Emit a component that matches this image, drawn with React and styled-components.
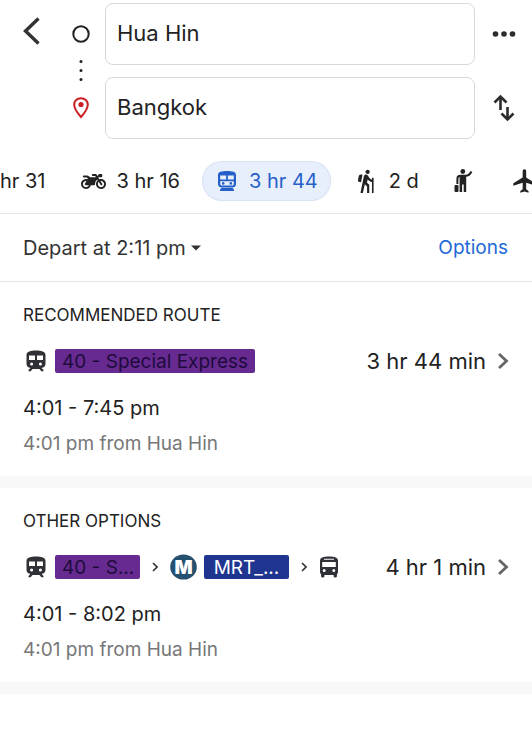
import React, { useState } from "react";
import styled, { createGlobalStyle } from "styled-components";
import { FaMotorcycle } from "react-icons/fa";
import { MdFlight, MdHiking } from "react-icons/md";

const BackIcon = () => (
  <svg width="18" height="30" viewBox="0 0 18 30" fill="none">
    <path d="M16.500 2.500 3.500 15l13 12.500" stroke="#333" strokeWidth="3.400" />
  </svg>
);

const OriginIcon = () => (
  <svg width="18" height="18" viewBox="0 0 18 18" fill="none">
    <circle cx="9" cy="9" r="7.700" stroke="#222" strokeWidth="2" />
  </svg>
);

const TrailIcon = () => (
  <svg width="4" height="22" viewBox="0 0 4 22" fill="#222">
    <circle cx="2" cy="2.500" r="1.500" />
    <circle cx="2" cy="11.500" r="1.500" />
    <circle cx="2" cy="20.500" r="1.500" />
  </svg>
);

const PinIcon = () => (
  <svg width="16" height="22" viewBox="0 0 16 22" fill="none">
    <path
      d="M8 1.200C4.100 1.200 1.200 4 1.200 7.700 1.200 12.300 8 20 8 20s6.800-7.700 6.800-12.300C14.800 4 11.900 1.200 8 1.200z"
      stroke="#cc1f24"
      strokeWidth="2"
    />
    <circle cx="8" cy="7.500" r="2.600" fill="#cc1f24" />
  </svg>
);

const MoreIcon = () => (
  <svg width="24" height="8" viewBox="0 0 24 8" fill="#2c2c2c">
    <circle cx="3.500" cy="4" r="2.800" />
    <circle cx="12" cy="4" r="2.800" />
    <circle cx="20.500" cy="4" r="2.800" />
  </svg>
);

const SwapIcon = () => (
  <svg width="22" height="28" viewBox="0 0 22 28" fill="none">
    <path
      d="M7.500 16V2M1.500 8.500l6-6 6 6M14.500 13v13M8.500 19.500l6 6 6-6"
      stroke="#2c2c2c"
      strokeWidth="2.600"
    />
  </svg>
);

const SubwayIcon = () => (
  <svg width="24" height="22" viewBox="0 0 24 22" fill="currentColor">
    <path
      fillRule="evenodd"
      d="M3 5C3 1.800 6.500 1 12 1s9 .8 9 4v9c0 2-1.500 3.500-3.500 3.500h-11C4.500 17.500 3 16 3 14zM5.200 5.500v4h5.900v-4zm7.700 0v4h5.900v-4zM5.200 11.300v2.800c0 .9.700 1.500 1.600 1.500h10.400c.9 0 1.600-.6 1.600-1.500v-2.800z"
    />
    <circle cx="8.200" cy="13.400" r="1.300" />
    <circle cx="15.800" cy="13.400" r="1.300" />
    <path d="M6.500 18h11l1.500 1.600V21H5v-1.400z" />
  </svg>
);

const HailIcon = () => (
  <svg width="28" height="28" viewBox="0 0 28 28" fill="none">
    <circle cx="10.800" cy="4.500" r="2.400" fill="currentColor" />
    <path
      d="M5.400 17v-5c0-2 1-3.200 3-3.200h5.200c2.600 0 4.600-1.600 5.800-4.300"
      stroke="currentColor"
      strokeWidth="2"
    />
    <path d="M7.600 8h6.600v17h-2.500v-7.500h-1.600V25H7.600z" fill="currentColor" />
    <rect x="2.500" y="18" width="4" height="7" rx="1" fill="currentColor" />
  </svg>
);

const TrainIcon = () => (
  <svg width="20" height="22" viewBox="0 0 20 22" fill="#2f3136">
    <path
      fillRule="evenodd"
      d="M.5 5C.5 1.400 4.800.5 10 .5s9.500.9 9.500 4.500v9c0 2.100-1.800 3.800-3.900 3.900l1.900 2.100v1.300h-2.200L13.500 19h-7l-1.800 2.300H2.500V20l1.900-2.100C2.300 17.800.5 16.100.5 14zM3 5.500v4.500h6V5.500zm8 0v4.500h6V5.500zM5.600 12.400a1.500 1.500 0 1 0 0 3 1.500 1.500 0 0 0 0-3zm8.800 0a1.500 1.500 0 1 0 0 3 1.500 1.500 0 0 0 0-3z"
    />
  </svg>
);

const BusIcon = () => (
  <svg width="20" height="22" viewBox="0 0 20 22" fill="#2f3136">
    <path
      fillRule="evenodd"
      d="M1 5c0-3.400 3.200-4.500 9-4.500S19 1.600 19 5v11c0 1-.4 1.800-1.100 2.400v1.900c0 .7-.5 1.200-1.200 1.200h-.9c-.7 0-1.200-.5-1.200-1.200V19H5.400v1.300c0 .7-.5 1.200-1.200 1.200h-.9c-.7 0-1.200-.5-1.200-1.200v-1.900C1.400 17.800 1 17 1 16zM3.200 6v5h13.600V6zM5.200 13a1.500 1.500 0 1 0 0 3 1.500 1.500 0 0 0 0-3zm9.600 0a1.500 1.500 0 1 0 0 3 1.500 1.500 0 0 0 0-3zM5 2.800v1h10v-1z"
    />
  </svg>
);

const MetroIcon = () => (
  <svg width="27" height="26" viewBox="0 0 27 26">
    <ellipse cx="13.500" cy="13" rx="13.300" ry="12.600" fill="#26506f" />
    <text
      x="13.500"
      y="20"
      textAnchor="middle"
      fontSize="19"
      fontWeight="900"
      fill="#fff"
    >
      M
    </text>
  </svg>
);

const CaretIcon = () => (
  <svg width="10" height="6" viewBox="0 0 10 6">
    <path d="M0 .5h10l-5 5z" fill="#333" />
  </svg>
);

const SmallArrow = () => (
  <svg width="6" height="10" viewBox="0 0 6 10" fill="none">
    <path d="M1 1l4 4-4 4" stroke="#333" strokeWidth="1.600" />
  </svg>
);

const BigArrow = () => (
  <svg width="12" height="18" viewBox="0 0 12 18" fill="none">
    <path d="M2 2l7.500 7L2 16" stroke="#666" strokeWidth="2.800" />
  </svg>
);

const modes = [
  { id: "car", time: "hr 31", label: "Driving" },
  { id: "moto", time: "3 hr 16", label: "Motorcycle", icon: <FaMotorcycle size={25} /> },
  { id: "transit", time: "3 hr 44", label: "Transit", icon: <SubwayIcon /> },
  { id: "walk", time: "2 d", label: "Walking", icon: <MdHiking size={26} /> },
  { id: "ride", label: "Ride service", icon: <HailIcon /> },
  { id: "flight", label: "Flights", icon: <MdFlight size={28} /> },
];

const modePadding = ({ $first, $iconOnly }) => {
  if ($first) return "0 14px 0 0";
  return $iconOnly ? "0 11px" : "0 13px";
};

const Route = ({ duration, times, from, children }) => (
  <>
    <RouteRow>
      <Legs>{children}</Legs>
      <Duration href="#">
        {duration}
        <BigArrow />
      </Duration>
    </RouteRow>
    <Times>{times}</Times>
    <From>{from}</From>
  </>
);

const App = () => {
  const [origin, setOrigin] = useState("Hua Hin");
  const [destination, setDestination] = useState("Bangkok");
  const [mode, setMode] = useState("transit");

  return (
    <>
      <GlobalStyle />
      <Header>
        <BackButton aria-label="Back">
          <BackIcon />
        </BackButton>
        <Markers>
          <OriginIcon />
          <TrailIcon />
          <PinIcon />
        </Markers>
        <Fields>
          <Field
            aria-label="Origin"
            value={origin}
            onChange={(e) => setOrigin(e.target.value)}
          />
          <Field
            aria-label="Destination"
            value={destination}
            onChange={(e) => setDestination(e.target.value)}
          />
        </Fields>
        <Actions>
          <IconButton aria-label="More">
            <MoreIcon />
          </IconButton>
          <IconButton
            aria-label="Swap"
            onClick={() => {
              setOrigin(destination);
              setDestination(origin);
            }}
          >
            <SwapIcon />
          </IconButton>
        </Actions>
      </Header>

      <Modes>
        {modes.map((m) => (
          <Mode
            key={m.id}
            aria-label={m.time ? undefined : m.label}
            $first={!m.icon}
            $iconOnly={!m.time}
            $active={mode === m.id}
            onClick={() => setMode(m.id)}
          >
            {m.icon}
            {m.time}
          </Mode>
        ))}
      </Modes>

      <FilterBar>
        <Depart>
          <select aria-label="Departure time">
            <option>Depart at 2:11 pm</option>
          </select>
          <CaretIcon />
        </Depart>
        <a href="#">Options</a>
      </FilterBar>

      <Section>
        <h2>RECOMMENDED ROUTE</h2>
        <Route
          duration="3 hr 44 min"
          times="4:01 - 7:45 pm"
          from="4:01 pm from Hua Hin"
        >
          <TrainIcon />
          <Line>40 - Special Express</Line>
        </Route>
      </Section>

      <Section>
        <h2>OTHER OPTIONS</h2>
        <Route
          duration="4 hr 1 min"
          times="4:01 - 8:02 pm"
          from="4:01 pm from Hua Hin"
        >
          <TrainIcon />
          <Line $short>40 - S...</Line>
          <Step>
            <SmallArrow />
          </Step>
          <MetroIcon />
          <Line $short $metro>
            MRT_...
          </Line>
          <Step>
            <SmallArrow />
          </Step>
          <BusIcon />
        </Route>
      </Section>
    </>
  );
};
export default App;

const GlobalStyle = createGlobalStyle`
  * {
    box-sizing: border-box;
  }
  body {
    margin: 0;
    background: #fff;
    color: #222;
    font-family: Inter, "Liberation Sans", sans-serif;
    font-size: 19px;
    overflow-x: hidden;
  }
  button, input, select {
    font: inherit;
    color: inherit;
    border: 0;
    padding: 0;
    background: none;
  }
  svg {
    display: block;
    flex-shrink: 0;
  }
`;

const Header = styled.header`
  display: grid;
  grid-template-columns: 62px 38px 1fr 57px;
  padding-top: 3px;
`;

const BackButton = styled.button`
  height: 56px;
  display: flex;
  align-items: center;
  padding-left: 22px;
`;

const Markers = styled.div`
  display: flex;
  flex-direction: column;
  align-items: center;
  justify-content: space-between;
  padding: 22px 0 20px;
`;

const Fields = styled.div`
  display: grid;
  gap: 12px;
  margin-left: 5px;
`;

const Field = styled.input`
  width: 100%;
  height: 62px;
  padding: 0 11px 2px;
  border: 1px solid #d8d8d8;
  border-radius: 8px;
  font-size: 22px;
`;

const Actions = styled.div`
  display: grid;
  grid-auto-rows: 62px;
  gap: 12px;
`;

const IconButton = styled.button`
  display: flex;
  align-items: center;
  justify-content: center;
`;

const Modes = styled.nav`
  display: flex;
  align-items: center;
  gap: 9px;
  height: 75px;
  padding-top: 10px;
  overflow: hidden;
  border-bottom: 1px solid #e6e6e6;
`;

const Mode = styled.button`
  display: flex;
  flex-shrink: 0;
  align-items: center;
  gap: 10px;
  height: 40px;
  padding: ${modePadding};
  border-radius: 20px;
  font-size: 20px;
  white-space: nowrap;
  color: ${(props) => (props.$active ? "#2560c8" : "#222")};
  background: ${(props) => (props.$active ? "#e8effc" : "transparent")};
  box-shadow: ${(props) => (props.$active ? "inset 0 0 0 1px #d8e3f5" : "none")};
`;

const FilterBar = styled.div`
  display: flex;
  align-items: center;
  justify-content: space-between;
  height: 68px;
  padding: 0 24px 0 23px;
  border-bottom: 1px solid #e6e6e6;
  color: #333;
  a {
    color: #2168d8;
    text-decoration: none;
  }
`;

const Depart = styled.label`
  display: flex;
  align-items: center;
  gap: 5px;
  font-size: 20px;
  select {
    appearance: none;
  }
`;

const Section = styled.section`
  padding: 22px 23px 20px;
  border-bottom: 12px solid #f8f8f8;
  h2 {
    margin: 0 0 20px;
    font-size: 17px;
    line-height: 22px;
    font-weight: 400;
  }
`;

const RouteRow = styled.div`
  display: flex;
  align-items: center;
  justify-content: space-between;
  height: 30px;
`;

const Legs = styled.div`
  display: flex;
  align-items: center;
  padding-left: 3px;
`;

const Line = styled.span`
  width: ${(props) => (props.$short ? "85px" : "auto")};
  height: 24px;
  margin-left: ${(props) => (props.$metro ? "7px" : "9px")};
  padding: 1px 7px 0;
  border-radius: 2px;
  line-height: 24px;
  text-align: center;
  white-space: nowrap;
  color: ${(props) => (props.$metro ? "#fff" : "#1f0a3c")};
  background: ${(props) => (props.$metro ? "#1f3590" : "#662a91")};
`;

const Step = styled.span`
  display: flex;
  justify-content: center;
  width: 30px;
`;

const Duration = styled.a`
  display: flex;
  align-items: center;
  gap: 11px;
  font-size: 22px;
  color: #222;
  text-decoration: none;
`;

const Times = styled.p`
  margin: 20px 0 0;
  font-size: 20px;
  line-height: 24px;
`;

const From = styled.p`
  margin: 12px 0 0;
  line-height: 24px;
  color: #777;
`;
